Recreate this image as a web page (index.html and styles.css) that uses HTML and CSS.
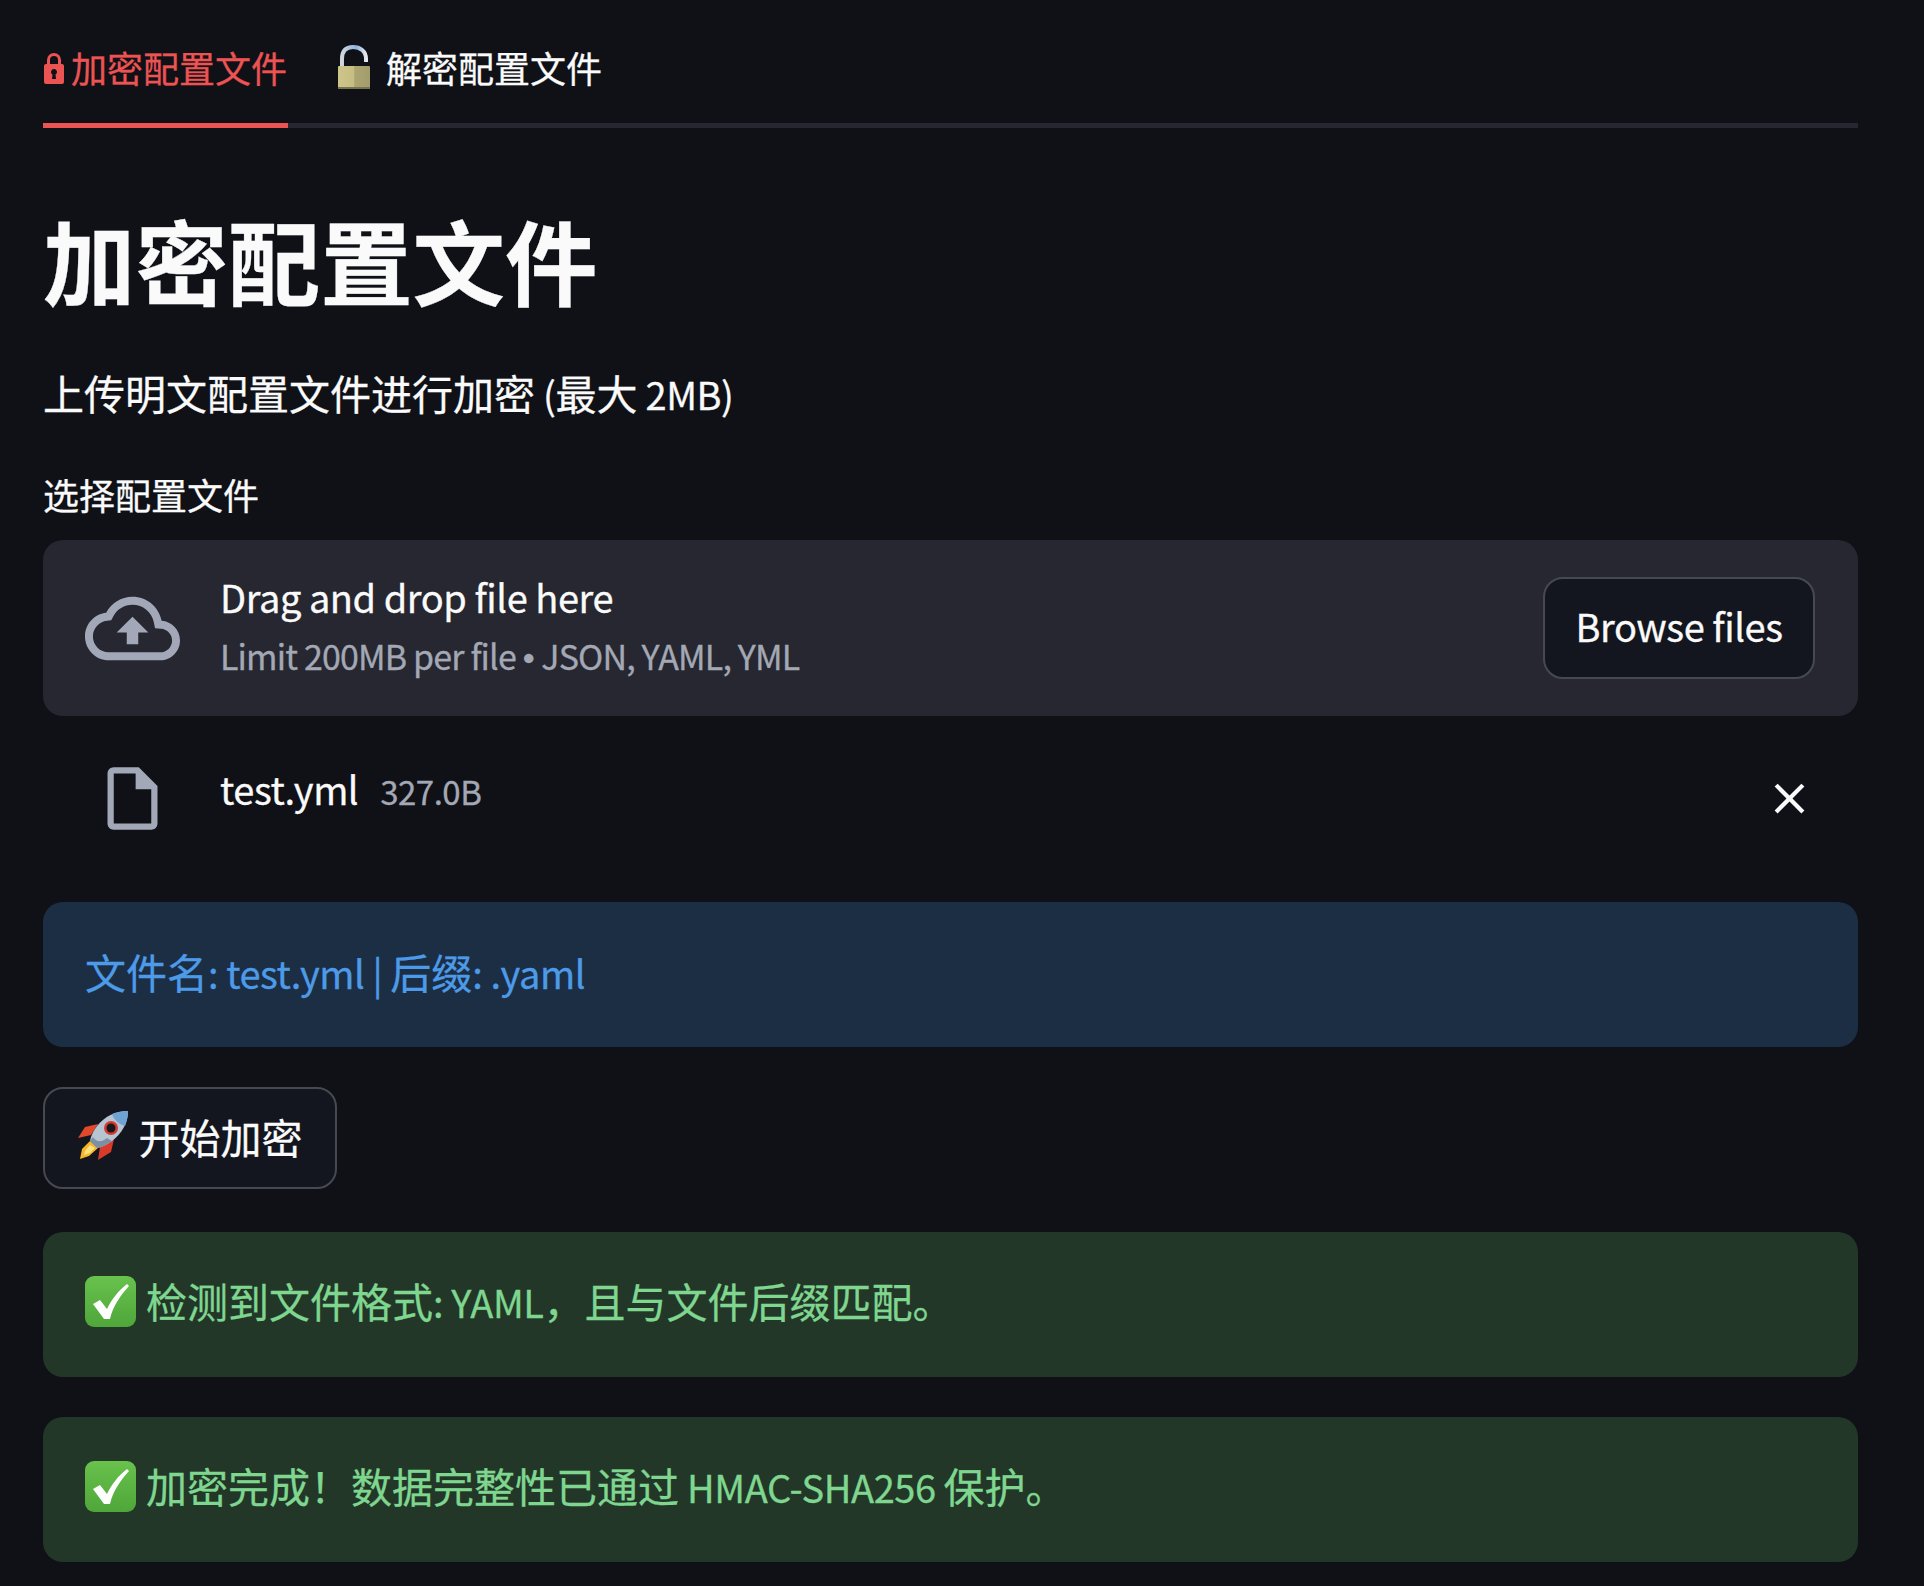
FILE: index.html
```html
<!DOCTYPE html>
<html lang="zh">
<head>
<meta charset="utf-8">
<title>加密配置文件</title>
<link rel="stylesheet" href="styles.css">
</head>
<body>
<main class="page">
  <nav class="tabs">
    <div class="tab tab-active">
      <svg class="lock-red" viewBox="0 0 20 33"><path fill="#ec5353" fill-rule="evenodd" d="M3 13V9a7 7 0 0 1 14 0v4h1a2 2 0 0 1 2 2v16a2 2 0 0 1-2 2H2a2 2 0 0 1-2-2V15a2 2 0 0 1 2-2zm3 0h8V9a4 4 0 0 0-8 0zm4 5a3 3 0 0 0-1.500 5.600L8 28h4l-.5-4.400A3 3 0 0 0 10 18z"/></svg>
      <span>加密配置文件</span>
    </div>
    <div class="tab">
      <svg class="lock-open" viewBox="0 0 34 45">
        <defs>
          <linearGradient id="brass" x1="0" x2="1" y1="0" y2="0"><stop offset="0" stop-color="#cdc58a"/><stop offset=".5" stop-color="#c6bd82"/><stop offset=".52" stop-color="#aca572"/><stop offset="1" stop-color="#a29c6c"/></linearGradient>
          <linearGradient id="shackle" x1="0" x2="1" y1="0" y2="0"><stop offset="0" stop-color="#cfd6de"/><stop offset=".6" stop-color="#8fb4de"/><stop offset="1" stop-color="#e6e9ee"/></linearGradient>
          <linearGradient id="gloss" x1="0" x2="0" y1="0" y2="1"><stop offset="0" stop-color="#68c24c"/><stop offset="1" stop-color="#4fa63a"/></linearGradient>
        </defs>
        <path fill="none" stroke="url(#shackle)" stroke-width="4" d="M5 22V14C5 6 9 2 16 2s13 4 13 12v3"/>
        <rect x="1" y="21" width="32" height="23" rx="1" fill="url(#brass)"/>
        <rect x="1" y="42" width="32" height="2" fill="#77724f"/>
      </svg>
      <span>解密配置文件</span>
    </div>
  </nav>

  <h1 class="title">加密配置文件</h1>
  <p class="lead">上传明文配置文件进行加密<span class="latin"> (</span>最大<span class="latin"> 2MB)</span></p>
  <div class="field-label">选择配置文件</div>

  <section class="uploader">
    <div class="icon-slot">
      <svg class="icon-cloud" viewBox="0 0 24 24"><path d="M19.35 10.04C18.67 6.59 15.64 4 12 4 9.11 4 6.6 5.64 5.35 8.04 2.34 8.36 0 10.91 0 14c0 3.31 2.69 6 6 6h13c2.76 0 5-2.24 5-5 0-2.64-2.05-4.78-4.65-4.96zM19 18H6c-2.21 0-4-1.79-4-4 0-2.05 1.53-3.76 3.56-3.97l1.07-.11.5-.95C8.08 7.14 9.94 6 12 6c2.62 0 4.88 1.86 5.39 4.43l.3 1.5 1.53.11c1.56.1 2.78 1.41 2.78 2.96 0 1.65-1.35 3-3 3zM8 13h2.55v3h2.9v-3H16l-4-4z"/></svg>
    </div>
    <div class="uploader-text">
      <div class="drop-title latin">Drag and drop file here</div>
      <div class="drop-limit">Limit 200MB per file <span class="bullet">•</span> JSON, YAML, YML</div>
    </div>
    <button class="btn btn-browse"><span class="latin">Browse files</span></button>
  </section>

  <section class="file-row">
    <div class="icon-slot">
      <svg class="icon-file" viewBox="0 0 24 24"><path d="M14 2H6c-1.100 0-1.990.9-1.990 2L4 20c0 1.100.89 2 1.990 2H18c1.100 0 2-.9 2-2V8l-6-6zM6 20V4h7v5h5v11H6z"/></svg>
    </div>
    <div class="file-meta"><span class="file-name latin">test.yml</span><span class="file-size">327.0B</span></div>
    <svg class="icon-close" viewBox="0 0 24 24"><path d="M19 6.410L17.590 5 12 10.590 6.410 5 5 6.410 10.590 12 5 17.590 6.410 19 12 13.410 17.590 19 19 17.590 13.410 12z"/></svg>
  </section>

  <div class="alert alert-info"><span>文件名<span class="latin">: test.yml | </span>后缀<span class="latin">: .yaml</span></span></div>

  <button class="btn btn-start">
    <svg class="rocket" viewBox="0 0 51 49">
      <path fill="#e2492b" d="M20 13 7 16 0 27l13-3z"/>
      <path fill="#d93a2a" d="M36 28l-3 13-13 8 2-13z"/>
      <path fill="#f7b52c" d="M12 30 4 38l-2 10 9-3 9-8z"/>
      <path fill="#fbe27a" d="M12 34l-5 6-1 4 6-2 5-5z"/>
      <path fill="#b7c4d2" d="M50 0c-12 0-23 5-31 15-3 4-6 9-7 15l7 7c6-1 11-4 15-7C44 22 50 12 50 0z"/>
      <path fill="#6fa3d4" d="M50 0c-6 0-11 1-16 3 2 6 7 10 13 12 2-5 3-10 3-15z"/>
      <path fill="#7d8fa3" d="M12 30l7 7c6-1 11-4 15-7l-5-3c-5 4-10 5-14-1z"/>
      <circle cx="33" cy="17" r="7" fill="#d43a2e"/>
      <circle cx="33" cy="17" r="4.500" fill="#16181c"/>
    </svg>
    <span>开始加密</span>
  </button>

  <div class="alert alert-success">
    <svg class="check" viewBox="0 0 51 51"><rect width="51" height="51" rx="9" fill="url(#gloss)"/><path fill="#fff" d="M8 28l7-4 7 9C27 23 33 15 42 8l2 2C35 20 28 30 25 43h-6z"/></svg>
    <span class="alert-text">检测到文件格式<span class="latin">: YAML</span>，且与文件后缀匹配。</span>
  </div>

  <div class="alert alert-success alert-last">
    <svg class="check" viewBox="0 0 51 51"><rect width="51" height="51" rx="9" fill="url(#gloss)"/><path fill="#fff" d="M8 28l7-4 7 9C27 23 33 15 42 8l2 2C35 20 28 30 25 43h-6z"/></svg>
    <span class="alert-text">加密完成！数据完整性已通过<span class="latin"> HMAC-SHA256 </span>保护。</span>
  </div>
</main>
</body>
</html>
```

FILE: styles.css
```css
* { box-sizing: border-box; }
html, body { margin: 0; padding: 0; background: #0f1117; }
body {
  color: #fafafa;
  font-family: "Noto Sans CJK SC", "Noto Sans", sans-serif;
  -webkit-text-stroke: 0.3px currentColor;
}
.latin { font-size: 38px; letter-spacing: -0.012em; line-height: 1; }
.bullet { font-family: "Liberation Sans", sans-serif; letter-spacing: 0; }
.page {
  width: 1924px;
  height: 1586px;
  padding: 0 66px 0 43px;
  display: flex;
  flex-direction: column;
  overflow: hidden;
}
.tabs {
  display: flex;
  gap: 46px;
  height: 128px;
  border-bottom: 5px solid #262730;
}
.tab {
  display: flex;
  align-items: center;
  height: 128px;
  padding-top: 20px;
  padding-bottom: 9px;
  font-size: 36px;
  line-height: 58px;
  white-space: nowrap;
  border-bottom: 5px solid transparent;
}
.tab-active {
  color: #ec5353;
  border-bottom-color: #ec5353;
  width: 245px;
}
.lock-red { width: 20px; height: 33px; margin: 0 7px 0 1px; flex: none; }
.lock-open { width: 34px; height: 45px; margin: 0 15px 0 3px; flex: none; }

.title {
  margin: 71px 0 0;
  font-size: 92.400px;
  line-height: 120px;
  font-weight: 700;
}
.lead {
  margin: 43px 0 0;
  font-size: 41px;
  line-height: 60px;
}
.field-label {
  margin-top: 47px;
  font-size: 36px;
  line-height: 50px;
}
.uploader {
  margin-top: 21px;
  height: 176px;
  border-radius: 20px;
  background: #262730;
  display: flex;
  align-items: center;
  padding: 0 43px 0 42px;
}
.icon-slot { width: 95px; flex: none; display: flex; justify-content: center; }
.icon-cloud { width: 95px; height: 95px; fill: #a3a8b8; }
.icon-file { width: 75px; height: 75px; fill: #a3a8b8; }
.uploader-text { margin-left: 40px; flex: 1; }
.drop-title { line-height: 58px; }
.drop-limit { font-size: 34px; letter-spacing: -0.025em; line-height: 60px; color: #a3a8b4; }
.btn {
  font-family: inherit;
  color: #fafafa;
  background: #13161f;
  border: 2.500px solid #474952;
  border-radius: 20px;
  height: 102px;
  padding: 0 0 5px;
  display: flex;
  align-items: center;
  justify-content: center;
  flex: none;
}
.btn-browse { width: 272px; font-size: 41px; }
.file-row {
  margin-top: 46px;
  height: 72px;
  display: flex;
  align-items: center;
  padding: 0 0 0 42px;
}
.file-meta { margin-left: 40px; flex: 1; display: flex; align-items: baseline; gap: 22px; margin-top: -18px; }
.file-name { line-height: 58px; }
.file-size { font-size: 33px; letter-spacing: -0.015em; color: #a3a8b4; }
.icon-close { width: 51px; height: 51px; fill: #fafafa; margin-right: 43px; flex: none; }

.alert {
  height: 145px;
  border-radius: 20px;
  padding: 0 41px 8px 42px;
  display: flex;
  align-items: center;
  gap: 10px;
  font-size: 41px;
  line-height: 60px;
  flex: none;
}
.alert-info {
  margin-top: 68px;
  background: #1c2e43;
  color: #4d9be8;
}
.alert-success {
  margin-top: 43px;
  background: #233729;
  color: #7fd68f;
}
.alert-last { margin-top: 40px; }
.alert-text { margin-top: -2px; }
.check { width: 51px; height: 51px; flex: none; margin-top: 2px; }

.btn-start {
  margin-top: 40px;
  width: 294px;
  gap: 10px;
  font-size: 41px;
}
.rocket { width: 51px; height: 49px; flex: none; }
```
